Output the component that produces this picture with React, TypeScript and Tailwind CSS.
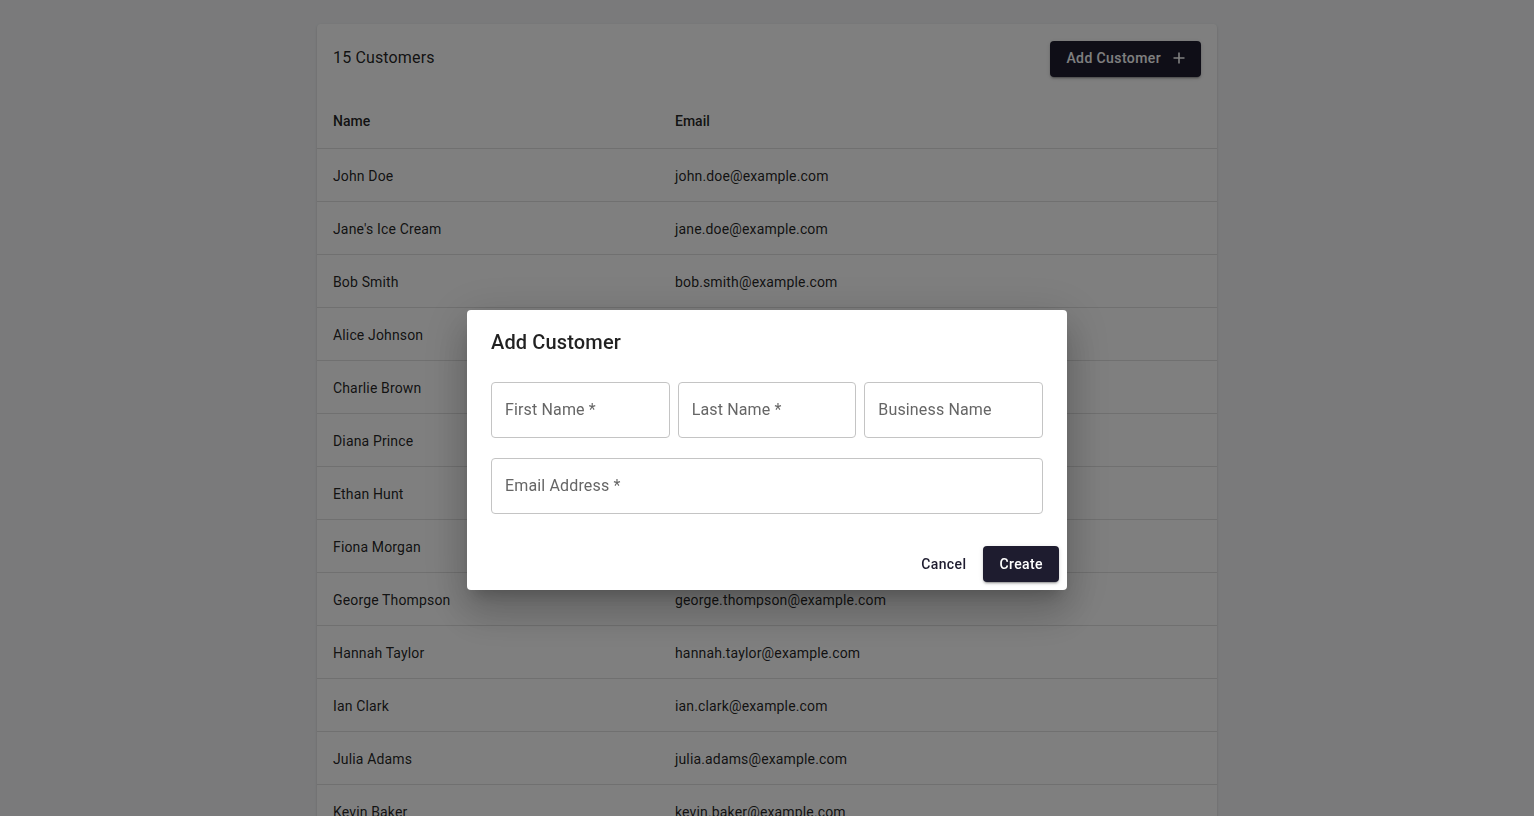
import React from "react";

const customers: [string, string][] = [
  ["John Doe", "john.doe@example.com"],
  ["Jane's Ice Cream", "jane.doe@example.com"],
  ["Bob Smith", "bob.smith@example.com"],
  ["Alice Johnson", "alice.johnson@example.com"],
  ["Charlie Brown", "charlie.brown@example.com"],
  ["Diana Prince", "diana.prince@example.com"],
  ["Ethan Hunt", "ethan.hunt@example.com"],
  ["Fiona Morgan", "fiona.morgan@example.com"],
  ["George Thompson", "george.thompson@example.com"],
  ["Hannah Taylor", "hannah.taylor@example.com"],
  ["Ian Clark", "ian.clark@example.com"],
  ["Julia Adams", "julia.adams@example.com"],
  ["Kevin Baker", "kevin.baker@example.com"],
  ["Laura Wilson", "laura.wilson@example.com"],
  ["Michael Scott", "michael.scott@example.com"],
];

function Field({ label, className = "" }: { label: string; className?: string }) {
  return (
    <div
      className={`h-[56px] rounded-[4px] border border-[#c4c4c4] flex items-center px-[13px] text-[16px] text-[#666666] tracking-[0.15px] ${className}`}
    >
      {label}
    </div>
  );
}

export default function App() {
  return (
    <div
      className="min-h-screen bg-[#f4f5f7] text-[rgba(0,0,0,0.87)]"
      style={{ fontFamily: "Roboto, 'Noto Sans', sans-serif" }}
    >
      <div className="pt-[24px] flex justify-center">
        <div className="w-[900px] bg-white rounded-[4px] shadow-[0_2px_1px_-1px_rgba(0,0,0,0.2),0_1px_1px_0_rgba(0,0,0,0.14),0_1px_3px_0_rgba(0,0,0,0.12)]">
          <div className="flex items-center justify-between px-[16px] pt-[17px] pb-[16px]">
            <div className="text-[16px] tracking-[0.15px] pb-[2px]">15 Customers</div>
            <button className="h-[36px] flex items-center rounded-[4px] bg-[#1e1c2f] text-white text-[14px] font-medium tracking-[0.4px] pl-[16px] pr-[12px] pb-[2px] shadow-[0_3px_1px_-2px_rgba(0,0,0,0.2),0_2px_2px_0_rgba(0,0,0,0.14),0_1px_5px_0_rgba(0,0,0,0.12)]">
              Add Customer
              <svg width="20" height="20" viewBox="0 0 20 20" className="ml-[8px]">
                <path d="M10 4.5v11M4.5 10h11" stroke="white" strokeWidth="1.6" fill="none" />
              </svg>
            </button>
          </div>
          <table className="w-full text-[14px] border-collapse">
            <thead>
              <tr className="border-b border-[#e0e0e0]">
                <th className="text-left font-medium h-[55px] px-[16px] pt-[2px] w-[342px]">Name</th>
                <th className="text-left font-medium h-[55px] px-[16px] pt-[2px]">Email</th>
              </tr>
            </thead>
            <tbody>
              {customers.map(([n, e]) => (
                <tr key={n} className="border-b border-[#e0e0e0]">
                  <td className="px-[16px] pt-[17px] pb-[15px] leading-[20px] tracking-[0.15px]">{n}</td>
                  <td className="px-[16px] pt-[17px] pb-[15px] leading-[20px] tracking-[0.15px]">{e}</td>
                </tr>
              ))}
            </tbody>
          </table>
        </div>
      </div>

      <div className="fixed inset-0 bg-black/50 flex justify-center items-start pt-[310px]">
        <div className="w-[600px] bg-white rounded-[4px] shadow-[0_11px_15px_-7px_rgba(0,0,0,0.2),0_24px_38px_3px_rgba(0,0,0,0.14),0_9px_46px_8px_rgba(0,0,0,0.12)]">
          <div className="px-[24px] pt-[16px] pb-[16px] text-[20px] leading-[32px] font-medium tracking-[0.15px]">
            Add Customer
          </div>
          <div className="px-[24px] pt-[8px]">
            <div className="grid grid-cols-3 gap-[8px]">
              <Field label="First Name *" />
              <Field label="Last Name *" />
              <Field label="Business Name" />
            </div>
            <Field label="Email Address *" className="mt-[20px]" />
          </div>
          <div className="flex justify-end items-center gap-[8px] p-[8px] mt-[24px]">
            <button className="h-[36px] px-[8px] text-[14px] font-medium tracking-[0.4px] text-[#1e1c2f] rounded-[4px] mr-[1px]">
              Cancel
            </button>
            <button className="h-[36px] px-[16px] text-[14px] font-medium tracking-[0.4px] text-white bg-[#1e1c2f] rounded-[4px] shadow-[0_3px_1px_-2px_rgba(0,0,0,0.2),0_2px_2px_0_rgba(0,0,0,0.14),0_1px_5px_0_rgba(0,0,0,0.12)]">
              Create
            </button>
          </div>
        </div>
      </div>
    </div>
  );
}
